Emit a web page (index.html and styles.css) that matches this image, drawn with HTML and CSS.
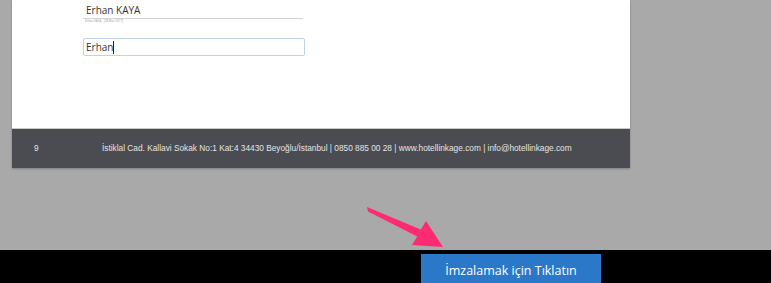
FILE: index.html
```html
<!DOCTYPE html>
<html lang="tr">
<head>
    <meta charset="UTF-8">
    <meta name="viewport" content="width=device-width, initial-scale=1.0">
    <title>Sözleşme - imza</title>
    <link rel="stylesheet" href="styles.css">
</head>
<body>
    <div class="viewer">
        <div class="page">
            <div class="page-body">
                <div class="signed-name">Erhan KAYA</div>
                <div class="sign-meta">Erhan KAYA &nbsp; [28.Mar.2017]</div>
                <div class="name-input">
                    <span class="typed">Erhan</span><span class="caret"></span>
                </div>
            </div>
            <div class="page-footer">
                <span class="page-no">9</span>
                <span class="address">İstiklal Cad. Kallavi Sokak No:1 Kat:4 34430 Beyoğlu/İstanbul | 0850 885 00 28 | www.hotellinkage.com | info@hotellinkage.com</span>
            </div>
        </div>
    </div>

    <div class="action-bar">
        <button class="sign-btn">İmzalamak için Tıklatın</button>
    </div>

    <svg class="hint-arrow" viewBox="0 0 90 50">
        <polygon points="2,4 55.8,26.4 61,18 78,44 47,42 52.2,33.6 3,8.5"/>
    </svg>
</body>
</html>
```

FILE: styles.css
```css
* {
    margin: 0;
    padding: 0;
    box-sizing: border-box;
}

body {
    background: #a9a9a9;
    height: 283px;
    overflow: hidden;
    font-family: 'Open Sans', sans-serif;
    position: relative;
}

.viewer {
    height: 250px;
    padding-left: 12px;
}

.page {
    width: 618px;
    box-shadow: 0 1px 2px rgba(0,0,0,0.25);
}

.page-body {
    background: #fff;
    height: 129px;
    padding: 2px 0 0 71px;
    border-bottom: 1px solid #c9c9c9;
}

.signed-name {
    width: 220px;
    font-size: 10px;
    color: #333;
    padding-left: 3px;
    line-height: 16px;
    border-bottom: 1px solid #d4d4d4;
}

.sign-meta {
    font-size: 3px;
    color: #999;
    line-height: 4px;
    padding-left: 2px;
}

.name-input {
    margin-top: 15px;
    width: 222px;
    height: 18px;
    border: 1px solid #bcd3ea;
    border-radius: 2px;
    display: flex;
    align-items: center;
    padding-left: 2px;
    font-size: 10px;
    color: #333;
}

.caret {
    display: inline-block;
    width: 1px;
    height: 13px;
    background: #222;
}

.page-footer {
    background: #4b4c51;
    height: 39px;
    display: flex;
    align-items: center;
    font-family: 'Liberation Sans', Arial, sans-serif;
    color: #e4e4e4;
    font-size: 8.3px;
    padding-left: 22px;
    padding-bottom: 2px;
}

.page-no {
    width: 68px;
}

.action-bar {
    background: #000;
    height: 33px;
    padding: 4px 0 0 421px;
}

.sign-btn {
    display: block;
    width: 180px;
    height: 30px;
    background: #2b78c8;
    border: none;
    color: #fff;
    font-family: 'Open Sans', sans-serif;
    font-size: 12.5px;
    padding-top: 2px;
    cursor: pointer;
}

.hint-arrow {
    position: absolute;
    left: 365px;
    top: 203px;
    width: 90px;
    height: 50px;
    fill: #ff2b72;
}
```
